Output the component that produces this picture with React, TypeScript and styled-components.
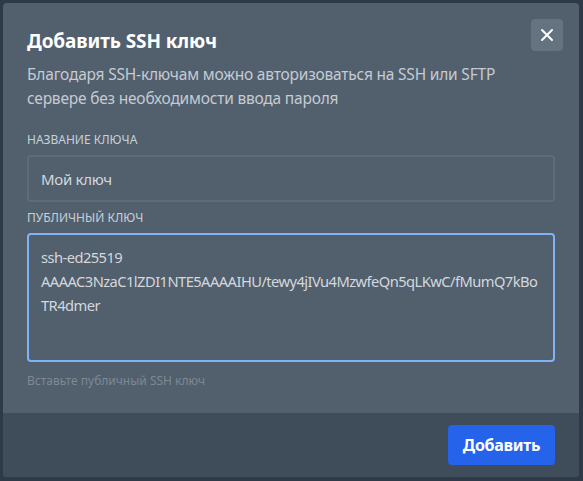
import React from "react";
import styled, { createGlobalStyle } from "styled-components";

const Global = createGlobalStyle`
  html, body { margin: 0; padding: 0; background: #2e3a47; }
  body { font-family: "Noto Sans", "Open Sans", sans-serif; }
  * { box-sizing: border-box; }
`;

const Page = styled.div`
  padding: 3px 4px 4px 3px;
  width: 583px;
  height: 481px;
`;

const Modal = styled.div`
  width: 576px;
  height: 474px;
  background: #525f6d;
  border-radius: 4px;
  overflow: hidden;
  display: flex;
  flex-direction: column;
`;

const Body = styled.div`
  position: relative;
  flex: 1;
  padding: 24px 24px 0 24px;
`;

const Title = styled.h2`
  margin: 0;
  font-size: 19px;
  line-height: 28px;
  font-weight: 700;
  letter-spacing: -0.1px;
  color: #ffffff;
`;

const Subtitle = styled.p`
  margin: 7px 0 0;
  font-size: 15.5px;
  line-height: 24px;
  letter-spacing: -0.2px;
  color: #c4cbd3;
`;

const CloseButton = styled.button`
  position: absolute;
  top: 16px;
  right: 16px;
  width: 32px;
  height: 32px;
  border: none;
  border-radius: 4px;
  background: #65727f;
  color: #ffffff;
  display: flex;
  align-items: center;
  justify-content: center;
  padding: 0;
  cursor: pointer;
`;

const Field = styled.div<{ $top: number }>`
  margin-top: ${(p) => p.$top}px;
  display: flex;
  flex-direction: column;
`;

const Label = styled.label`
  font-size: 12px;
  line-height: 16px;
  color: #c8cfd7;
  text-transform: uppercase;
  margin-bottom: 7px;
`;

const Input = styled.input`
  width: 528px;
  height: 47px;
  border: 2px solid #5f6b79;
  border-radius: 4px;
  background: #525f6d;
  color: #d3d8de;
  font-family: inherit;
  font-size: 15px;
  letter-spacing: -0.3px;
  padding: 0 12px;
  outline: none;
`;

const TextArea = styled.textarea`
  width: 528px;
  height: 129px;
  border: 2px solid #7fb3f5;
  border-radius: 4px;
  background: #525f6d;
  color: #d3d8de;
  font-family: inherit;
  font-size: 14.7px;
  letter-spacing: -0.55px;
  line-height: 24px;
  padding: 10px 12px;
  resize: none;
  outline: none;
  white-space: pre;
  overflow: hidden;
`;

const Hint = styled.div`
  margin-top: 11px;
  font-size: 12px;
  line-height: 16px;
  color: #7d8996;
`;

const Footer = styled.div`
  height: 64px;
  background: #3f4c5a;
  display: flex;
  align-items: center;
  justify-content: flex-end;
  padding: 0 24px;
`;

const PrimaryButton = styled.button`
  height: 40px;
  width: 107px;
  padding: 0;
  border: none;
  border-radius: 4px;
  background: #2563eb;
  color: #ffffff;
  font-family: inherit;
  font-size: 16px;
  font-weight: 700;
  letter-spacing: -0.3px;
  cursor: pointer;
`;

const keyText =
  "ssh-ed25519\nAAAAC3NzaC1lZDI1NTE5AAAAIHU/tewy4jIVu4MzwfeQn5qLKwC/fMumQ7kBo\nTR4dmer";

export default function App() {
  return (
    <>
      <Global />
      <Page>
        <Modal>
          <Body>
            <Title>Добавить SSH ключ</Title>
            <CloseButton aria-label="Закрыть">
              <svg width="14" height="14" viewBox="0 0 14 14" fill="none">
                <path d="M2 2L12 12M12 2L2 12" stroke="#fff" strokeWidth="2" strokeLinecap="round" />
              </svg>
            </CloseButton>
            <Subtitle>
              Благодаря SSH-ключам можно авторизоваться на SSH или SFTP
              <br />
              сервере без необходимости ввода пароля
            </Subtitle>
            <Field $top={22}>
              <Label>Название ключа</Label>
              <Input defaultValue="Мой ключ" />
            </Field>
            <Field $top={8}>
              <Label>Публичный ключ</Label>
              <TextArea defaultValue={keyText} spellCheck={false} />
            </Field>
            <Hint>Вставьте публичный SSH ключ</Hint>
          </Body>
          <Footer>
            <PrimaryButton>Добавить</PrimaryButton>
          </Footer>
        </Modal>
      </Page>
    </>
  );
}
